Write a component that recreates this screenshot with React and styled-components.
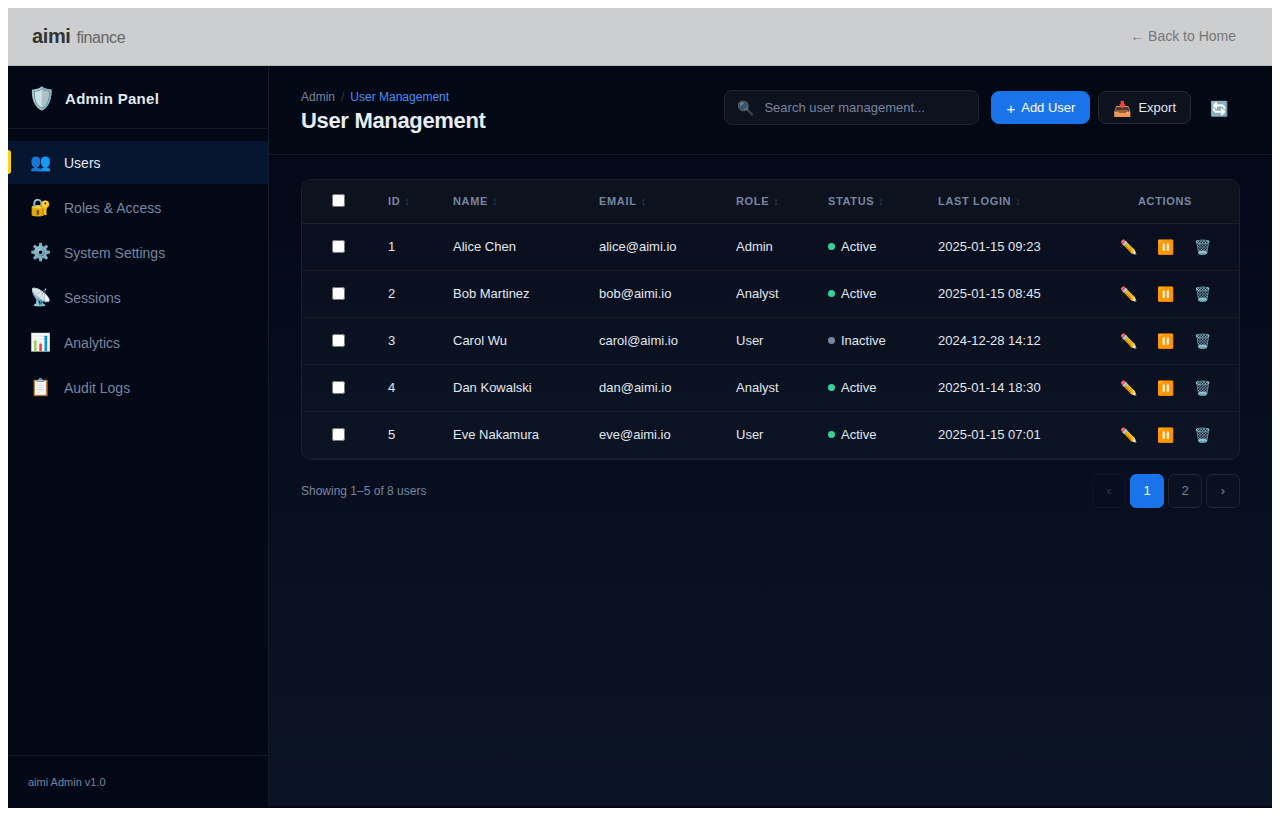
import React, { useState } from 'react';
import styled, { createGlobalStyle } from 'styled-components';

const GlobalStyle = createGlobalStyle`
  * {
    box-sizing: border-box;
  }

  body {
    margin: 8px;
    background: #ffffff;
    font-family: 'Liberation Sans', Arial, sans-serif;
  }

  button,
  input {
    font-family: inherit;
  }
`;

const Page = styled.div`
  display: flex;
  flex-direction: column;
  min-height: calc(100vh - 16px);
  padding-bottom: 2px;
  background: #020617;
  color: #e2e8f0;
`;

const TopBar = styled.header`
  display: flex;
  align-items: center;
  justify-content: space-between;
  height: 58px;
  padding: 0 36px 0 24px;
  background: #cdcecf;
  border-bottom: 1px solid #b4b9bd;
`;

const Logo = styled.a`
  display: flex;
  align-items: baseline;
  gap: 6px;
  color: #333333;
  font-size: 20px;
  font-weight: 700;
  letter-spacing: -0.02em;
  text-decoration: none;
`;

const LogoSub = styled.span`
  color: #666666;
  font-size: 16px;
  font-weight: 400;
`;

const BackLink = styled.a`
  padding-bottom: 2px;
  color: #777777;
  font-size: 14px;
  text-decoration: none;

  &:hover {
    color: #333333;
  }
`;

const Layout = styled.div`
  display: flex;
  flex: 1;
`;

const Sidebar = styled.aside`
  display: flex;
  flex-direction: column;
  flex: 0 0 261px;
  background: #020815;
  border-right: 1px solid #161b29;
`;

const SidebarHeader = styled.div`
  display: flex;
  align-items: center;
  gap: 10px;
  height: 63px;
  padding: 3px 20px 0;
  border-bottom: 1px solid #161b29;
`;

const ShieldIcon = styled.span`
  font-size: 22px;
  line-height: 26px;
`;

const SidebarTitle = styled.span`
  color: #e2e8f0;
  font-size: 15px;
  font-weight: 700;
  letter-spacing: 0.02em;
`;

const Nav = styled.nav`
  display: flex;
  flex-direction: column;
  flex: 1;
  gap: 2px;
  padding: 12px 0;
`;

const NavItem = styled.a`
  position: relative;
  display: flex;
  align-items: center;
  gap: 12px;
  height: 43px;
  padding: 0 20px;
  background: ${props => (props.$active ? '#061630' : 'transparent')};
  color: ${props => (props.$active ? '#e2e8f0' : '#7686a0')};
  font-size: 14px;
  text-decoration: none;

  &::before {
    content: '';
    display: ${props => (props.$active ? 'block' : 'none')};
    position: absolute;
    top: 9px;
    bottom: 10px;
    left: 0;
    width: 3px;
    border-radius: 0 3px 3px 0;
    background: #ffd600;
  }

  &:hover {
    color: #e2e8f0;
  }
`;

const NavIcon = styled.span`
  width: 24px;
  font-size: 17px;
  line-height: 20px;
  text-align: center;
`;

const SidebarFooter = styled.div`
  padding: 20px 20px 18px;
  border-top: 1px solid #161b29;
  color: #7686a0;
  font-size: 11px;
  line-height: 12px;
`;

const Main = styled.main`
  flex: 1;
  min-width: 0;
  background: linear-gradient(180deg, #020716 0%, #0b1426 100%);
`;

const PageHeader = styled.div`
  display: flex;
  align-items: flex-start;
  justify-content: space-between;
  height: 89px;
  padding: 24px 32px 0;
  background: #030815;
  border-bottom: 1px solid #161b29;
`;

const Breadcrumb = styled.nav`
  display: flex;
  gap: 6px;
  margin-bottom: 4px;
  color: #7686a0;
  font-size: 12px;
  line-height: 14px;

  a {
    color: inherit;
    text-decoration: none;
  }
`;

const Slash = styled.span`
  color: #333a49;
`;

const Current = styled.span`
  color: #4d8df6;
`;

const PageTitle = styled.h1`
  margin: 0;
  color: #e8edf7;
  font-size: 22px;
  font-weight: 700;
  line-height: 26px;
  letter-spacing: -0.015em;
`;

const Tools = styled.div`
  display: flex;
  align-items: center;
  gap: 12px;
`;

const SearchBox = styled.label`
  display: flex;
  align-items: center;
  gap: 10px;
  width: 255px;
  height: 35px;
  padding: 0 12px;
  background: #0d121f;
  border: 1px solid #20232f;
  border-radius: 8px;
`;

const SearchIcon = styled.span`
  width: 17px;
  font-size: 14px;
  opacity: 0.6;
`;

const SearchInput = styled.input`
  flex: 1;
  min-width: 0;
  padding: 0;
  background: none;
  border: none;
  outline: none;
  color: #e2e8f0;
  font-size: 13px;

  &::placeholder {
    color: #7686a0;
  }
`;

const ButtonGroup = styled.div`
  display: flex;
  gap: 8px;
`;

const ToolButton = styled.button`
  display: flex;
  align-items: center;
  justify-content: center;
  gap: 6px;
  height: 33px;
  padding: 0 14px;
  background: ${props => (props.$primary ? '#1a73e8' : '#0d121f')};
  border: 1px solid ${props => (props.$primary ? '#1a73e8' : '#262a36')};
  border-radius: 8px;
  color: ${props => (props.$primary ? '#ffffff' : '#e2e8f0')};
  font-size: 13px;
  cursor: pointer;
`;

const RefreshButton = styled(ToolButton)`
  width: 41px;
  padding: 0;
  background: none;
  border-color: transparent;
`;

const ButtonIcon = styled.span`
  padding-top: 2px;
  font-size: 15px;
  line-height: 18px;
`;

const Content = styled.section`
  padding: 24px 32px;
`;

const TableCard = styled.div`
  overflow: hidden;
  background: rgba(255, 255, 255, 0.025);
  border: 1px solid #1b202c;
  border-radius: 10px;
`;

const Table = styled.table`
  width: 100%;
  table-layout: fixed;
  border-collapse: separate;
  border-spacing: 0;
  font-size: 13px;
`;

const Th = styled.th`
  height: 44px;
  padding: 0 16px 2px;
  background: #0d121f;
  border-bottom: 1px solid #1b202c;
  color: #7686a0;
  font-size: 11px;
  font-weight: 700;
  letter-spacing: 0.06em;
  text-align: ${props => (props.$center ? 'center' : 'left')};
  text-transform: uppercase;
  white-space: nowrap;
`;

const SortMark = styled.span`
  margin-left: 4px;
  opacity: 0.4;
`;

const Td = styled.td`
  height: 47px;
  padding: 0 16px 2px;
  border-bottom: 1px solid #171c28;
  color: #e2e8f0;
  text-align: ${props => (props.$center ? 'center' : 'left')};
  white-space: nowrap;
`;

const ActionsTd = styled(Td)`
  padding-bottom: 0;
`;

const Checkbox = styled.input`
  margin: 3px 2px 3px 5px;
`;

const Status = styled.span`
  display: flex;
  align-items: center;
  gap: 6px;

  &::before {
    content: '';
    width: 7px;
    height: 7px;
    border-radius: 50%;
    background: ${props => (props.$active ? '#34d399' : '#7686a0')};
  }
`;

const Actions = styled.div`
  display: flex;
  justify-content: center;
  gap: 4px;
`;

const IconButton = styled.button`
  width: 33px;
  height: 28px;
  padding: 0;
  background: none;
  border: none;
  border-radius: 6px;
  font-size: 14px;
  cursor: pointer;

  &:hover {
    background: rgba(255, 255, 255, 0.06);
  }
`;

const TableFooter = styled.div`
  display: flex;
  align-items: center;
  justify-content: space-between;
  margin-top: 14px;
  color: #7686a0;
  font-size: 12px;
`;

const Pages = styled.div`
  display: flex;
  gap: 4px;
`;

const PageButton = styled.button`
  width: 34px;
  height: 34px;
  padding: 0 0 2px;
  background: ${props => (props.$active ? '#1a73e8' : 'rgba(255, 255, 255, 0.01)')};
  border: 1px solid ${props => (props.$active ? '#1a73e8' : '#1f2430')};
  border-radius: 6px;
  color: ${props => (props.$active ? '#ffffff' : '#7686a0')};
  font-size: 13px;
  cursor: pointer;

  &:disabled {
    opacity: 0.4;
    cursor: default;
  }
`;

const navItems = [
  { icon: '👥', label: 'Users' },
  { icon: '🔐', label: 'Roles & Access' },
  { icon: '⚙️', label: 'System Settings' },
  { icon: '📡', label: 'Sessions' },
  { icon: '📊', label: 'Analytics' },
  { icon: '📋', label: 'Audit Logs' },
];

const columns = ['ID', 'Name', 'Email', 'Role', 'Status', 'Last Login'];

const columnWidths = [70, 65, 146, 137, 92, 110, 169, 148];

const users = [
  { id: 1, name: 'Alice Chen', email: 'alice@aimi.io', role: 'Admin', status: 'Active', lastLogin: '2025-01-15 09:23' },
  { id: 2, name: 'Bob Martinez', email: 'bob@aimi.io', role: 'Analyst', status: 'Active', lastLogin: '2025-01-15 08:45' },
  { id: 3, name: 'Carol Wu', email: 'carol@aimi.io', role: 'User', status: 'Inactive', lastLogin: '2024-12-28 14:12' },
  { id: 4, name: 'Dan Kowalski', email: 'dan@aimi.io', role: 'Analyst', status: 'Active', lastLogin: '2025-01-14 18:30' },
  { id: 5, name: 'Eve Nakamura', email: 'eve@aimi.io', role: 'User', status: 'Active', lastLogin: '2025-01-15 07:01' },
];

const UserTable = () => {
  const [selected, setSelected] = useState([]);

  const toggle = (id) => {
    setSelected(selected.includes(id) ? selected.filter(s => s !== id) : [...selected, id]);
  };

  const toggleAll = () => {
    setSelected(selected.length === users.length ? [] : users.map(u => u.id));
  };

  return (
    <TableCard>
      <Table>
        <colgroup>
          {columnWidths.map((width, index) => <col key={index} width={width} />)}
        </colgroup>
        <thead>
          <tr>
            <Th $center>
              <Checkbox
                type="checkbox"
                aria-label="Select all users"
                checked={selected.length === users.length}
                onChange={toggleAll}
              />
            </Th>
            {columns.map(column => (
              <Th key={column}>{column}<SortMark>↕</SortMark></Th>
            ))}
            <Th $center>Actions</Th>
          </tr>
        </thead>
        <tbody>
          {users.map(user => (
            <tr key={user.id}>
              <Td $center>
                <Checkbox
                  type="checkbox"
                  aria-label={`Select ${user.name}`}
                  checked={selected.includes(user.id)}
                  onChange={() => toggle(user.id)}
                />
              </Td>
              <Td>{user.id}</Td>
              <Td>{user.name}</Td>
              <Td>{user.email}</Td>
              <Td>{user.role}</Td>
              <Td><Status $active={user.status === 'Active'}>{user.status}</Status></Td>
              <Td>{user.lastLogin}</Td>
              <ActionsTd>
                <Actions>
                  <IconButton aria-label="Edit">✏️</IconButton>
                  <IconButton aria-label="Suspend">⏸️</IconButton>
                  <IconButton aria-label="Delete">🗑️</IconButton>
                </Actions>
              </ActionsTd>
            </tr>
          ))}
        </tbody>
      </Table>
    </TableCard>
  );
};

const App = () => {
  const [search, setSearch] = useState('');

  return (
    <>
      <GlobalStyle />
      <Page>
        <TopBar>
          <Logo href="#">aimi <LogoSub>finance</LogoSub></Logo>
          <BackLink href="#">← Back to Home</BackLink>
        </TopBar>

        <Layout>
          <Sidebar>
            <SidebarHeader>
              <ShieldIcon>🛡️</ShieldIcon>
              <SidebarTitle>Admin Panel</SidebarTitle>
            </SidebarHeader>
            <Nav>
              {navItems.map((item, index) => (
                <NavItem key={item.label} href="#" $active={index === 0}>
                  <NavIcon>{item.icon}</NavIcon>
                  {item.label}
                </NavItem>
              ))}
            </Nav>
            <SidebarFooter>aimi Admin v1.0</SidebarFooter>
          </Sidebar>

          <Main>
            <PageHeader>
              <div>
                <Breadcrumb>
                  <a href="#">Admin</a>
                  <Slash>/</Slash>
                  <Current>User Management</Current>
                </Breadcrumb>
                <PageTitle>User Management</PageTitle>
              </div>
              <Tools>
                <SearchBox>
                  <SearchIcon>🔍</SearchIcon>
                  <SearchInput
                    type="text"
                    aria-label="Search user management"
                    placeholder="Search user management..."
                    value={search}
                    onChange={e => setSearch(e.target.value)}
                  />
                </SearchBox>
                <ButtonGroup>
                  <ToolButton $primary><ButtonIcon>+</ButtonIcon>Add User</ToolButton>
                  <ToolButton><ButtonIcon>📥</ButtonIcon>Export</ToolButton>
                  <RefreshButton aria-label="Refresh"><ButtonIcon>🔄</ButtonIcon></RefreshButton>
                </ButtonGroup>
              </Tools>
            </PageHeader>

            <Content>
              <UserTable />
              <TableFooter>
                <span>Showing 1–5 of 8 users</span>
                <Pages>
                  <PageButton disabled aria-label="Previous page">‹</PageButton>
                  <PageButton $active>1</PageButton>
                  <PageButton>2</PageButton>
                  <PageButton aria-label="Next page">›</PageButton>
                </Pages>
              </TableFooter>
            </Content>
          </Main>
        </Layout>
      </Page>
    </>
  );
};

export default App;
